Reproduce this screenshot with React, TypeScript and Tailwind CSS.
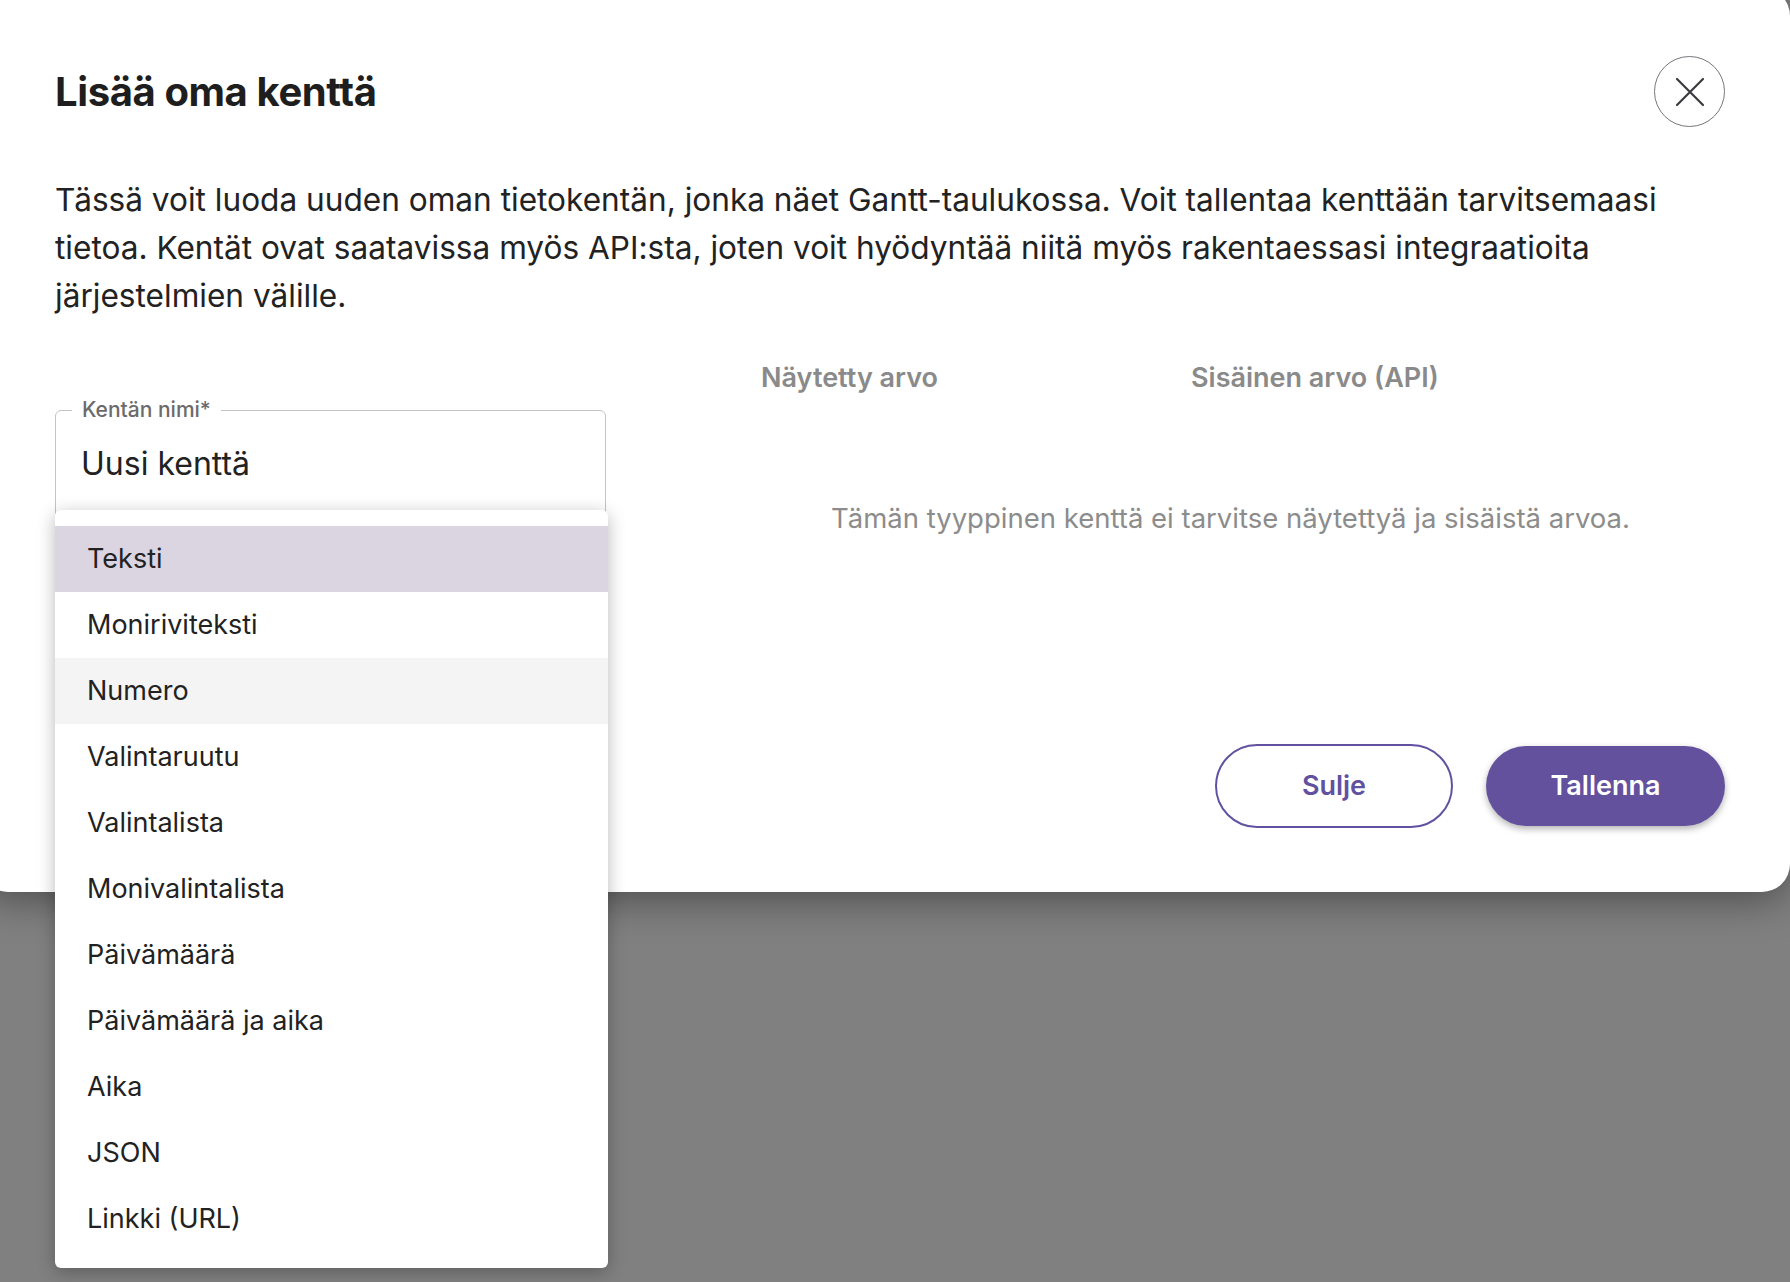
import { useState } from 'react'

const fieldTypes = [
  'Teksti',
  'Moniriviteksti',
  'Numero',
  'Valintaruutu',
  'Valintalista',
  'Monivalintalista',
  'Päivämäärä',
  'Päivämäärä ja aika',
  'Aika',
  'JSON',
  'Linkki (URL)',
]

function CloseButton() {
  return (
    <button className="w-[71px] h-[71px] rounded-full border-[1.5px] border-[#77777d] flex items-center justify-center shrink-0">
      <svg width="30" height="30" viewBox="0 0 30 30" fill="none">
        <path d="M2 2 L28 28 M28 2 L2 28" stroke="#3b3b40" strokeWidth="2.2" strokeLinecap="round" />
      </svg>
    </button>
  )
}

function TypeMenu({ selected, hovered }: { selected: string; hovered: string }) {
  return (
    <div className="absolute left-[-1px] top-[99px] w-[553px] bg-white rounded-[6px] py-4 shadow-[0_4px_18px_rgba(0,0,0,0.28)] z-10">
      {fieldTypes.map((t) => (
        <div
          key={t}
          className={
            'h-[66px] flex items-center pl-[32px] text-[27px] text-[#222]' +
            (t === selected ? ' bg-[#dbd5e2]' : t === hovered ? ' bg-[#f4f4f4]' : '')
          }
        >
          {t}
        </div>
      ))}
    </div>
  )
}

export default function App() {
  const [name] = useState('Uusi kenttä')

  return (
    <div className="relative h-[1282px] overflow-hidden bg-[#808080]" style={{ fontFamily: 'Inter, "Noto Sans", sans-serif' }}>
      {/* Modal */}
      <div className="ml-[-20px] mt-[-12px] bg-white rounded-[28px] pl-[75px] pr-[65px] pt-[68px] pb-[64px] shadow-[0_8px_40px_rgba(0,0,0,0.4)]">
        {/* Header */}
        <div className="flex items-center justify-between">
          <h1 className="text-[40px] font-bold text-[#1e1e1e] tracking-[-0.01em]">Lisää oma kenttä</h1>
          <CloseButton />
        </div>

        <p className="mt-[49px] text-[31.6px] leading-[48px] text-[#222] whitespace-nowrap">
          Tässä voit luoda uuden oman tietokentän, jonka näet Gantt-taulukossa. Voit tallentaa kenttään tarvitsemaasi
          <br />
          tietoa. Kentät ovat saatavissa myös API:sta, joten voit hyödyntää niitä myös rakentaessasi integraatioita
          <br />
          järjestelmien välille.
        </p>

        {/* Fields */}
        <div className="mt-[42px] flex">
          <div className="w-[551px] pt-[48px]">
            <div className="relative h-[108px] border-[1.5px] border-[#c4c4c4] rounded-[6px] px-[25px] flex items-center">
              <span className="absolute left-[16px] top-[-14px] bg-white px-[10px] text-[21px] leading-[26px] font-medium text-[#6b6b6b]">
                Kentän nimi*
              </span>
              <span className="text-[32px] text-[#222]">{name}</span>
              <TypeMenu selected="Teksti" hovered="Numero" />
            </div>
          </div>

          <div className="ml-[155px] flex-1 pr-[25px]">
            <div className="flex h-[32px] items-center text-[27px] font-semibold text-[#8a8a8a]">
              <span className="w-[430px]">Näytetty arvo</span>
              <span>Sisäinen arvo (API)</span>
            </div>
            <p className="mt-[106px] text-center text-[27.5px] leading-[36px] text-[#8c8c8c]">
              Tämän tyyppinen kenttä ei tarvitse näytettyä ja sisäistä arvoa.
            </p>
          </div>
        </div>

        {/* Footer */}
        <div className="mt-[208px] flex items-center justify-end gap-[33px]">
          <button className="w-[238px] h-[84px] rounded-full border-2 border-[#6151a0] text-[27px] font-semibold text-[#6151a0]">
            Sulje
          </button>
          <button className="w-[239px] h-[80px] rounded-full bg-[#63519e] text-[27px] font-semibold text-white shadow-[0_3px_7px_rgba(0,0,0,0.3)]">
            Tallenna
          </button>
        </div>
      </div>
    </div>
  )
}
